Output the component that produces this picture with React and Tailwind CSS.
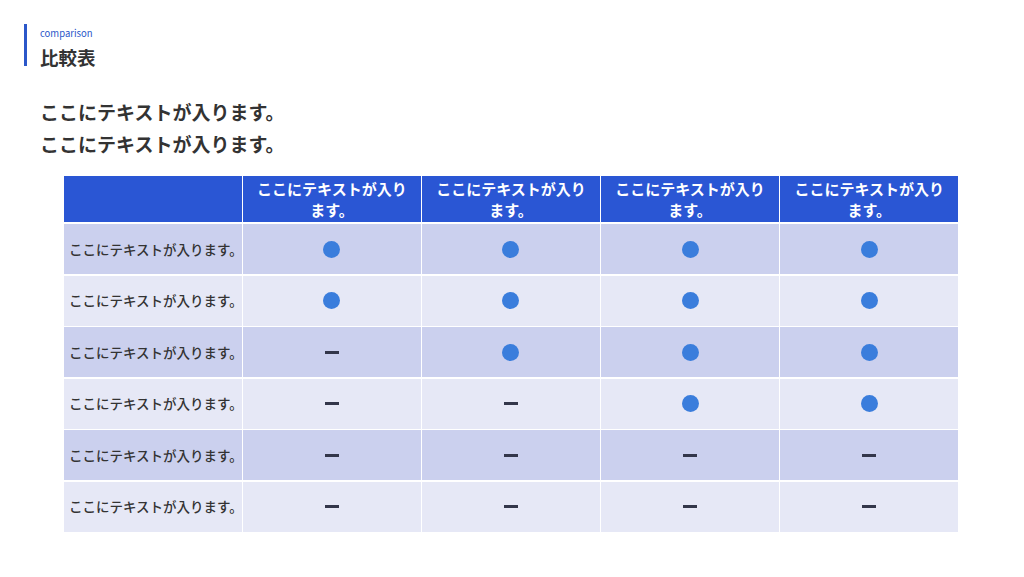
import React from 'react';

const font = { fontFamily: '"Noto Sans CJK JP", "Noto Sans", sans-serif' };

const header = ['', 'ここにテキストが入ります。', 'ここにテキストが入ります。', 'ここにテキストが入ります。', 'ここにテキストが入ります。'];

// true = 丸, false = ダッシュ
const rows = [
  [true, true, true, true],
  [true, true, true, true],
  [false, true, true, true],
  [false, false, true, true],
  [false, false, false, false],
  [false, false, false, false],
];

function Mark({ on }) {
  if (on) return <span className="block w-[17px] h-[17px] rounded-full bg-[#3a7ddc]" />;
  return <span className="block w-[14px] h-[3px] bg-[#33364a]" />;
}

export default function App() {
  return (
    <div className="w-[1024px] h-[577px] bg-white relative overflow-hidden" style={font}>
      <div className="pt-[24px] pl-[24px] flex">
        <div className="w-[3px] h-[42px] bg-[#2b57c9]" />
        <div className="pl-[13px]">
          <div className="text-[9.5px] leading-[12px] pt-[3px] text-[#2b57c9]">comparison</div>
          <div className="mt-[6px] text-[18.5px] leading-[24px] font-bold text-[#333]">比較表</div>
        </div>
      </div>

      <div className="pl-[40px] pt-[27px] text-[19px] leading-[32px] font-bold text-[#333]">
        <div>ここにテキストが入ります。</div>
        <div>ここにテキストが入ります。</div>
      </div>

      <div className="ml-[64px] mt-[16px] w-[894px] flex flex-col gap-y-[2px]">
        <div className="grid grid-cols-5 gap-x-[1.5px] h-[46px]">
          {header.map((h, i) => (
            <div key={i} className="bg-[#2a56d4] text-white font-bold text-[15px] leading-[21px] flex items-center justify-center text-center px-[12px]">
              {h}
            </div>
          ))}
        </div>
        <div className="flex flex-col gap-y-[1.5px]">
          {rows.map((r, ri) => (
            <div key={ri} className="grid grid-cols-5 gap-x-[1.5px] h-[50px]">
              <div className={`${ri % 2 === 0 ? 'bg-[#cbd0ee]' : 'bg-[#e6e8f6]'} flex items-center pl-[5px] text-[13.5px] text-[#333] font-medium whitespace-nowrap`}>
                ここにテキストが入ります。
              </div>
              {r.map((on, ci) => (
                <div key={ci} className={`${ri % 2 === 0 ? 'bg-[#cbd0ee]' : 'bg-[#e6e8f6]'} flex items-center justify-center`}>
                  <Mark on={on} />
                </div>
              ))}
            </div>
          ))}
        </div>
      </div>
    </div>
  );
}
